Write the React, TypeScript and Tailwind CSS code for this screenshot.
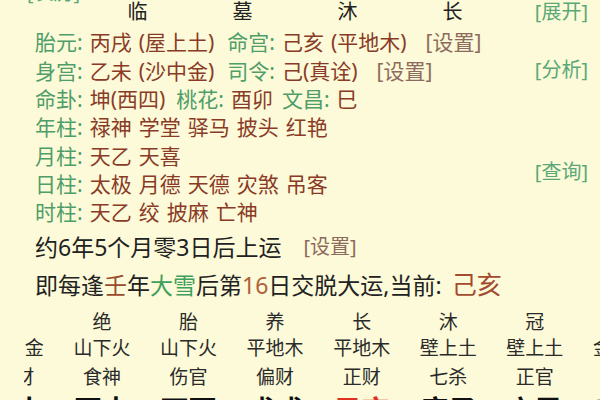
import React from 'react';

const green = 'text-[#4f9d69]';
const brown = 'text-[#8a3b27]';
const link = 'text-[#8d6b5c]';
const btn = 'text-[#5aa877]';

function Label({ children, className = '' }: { children: React.ReactNode; className?: string }) {
  return <span className={`${green} ${className}`}>{children}</span>;
}

function Val({ children, className = '' }: { children: React.ReactNode; className?: string }) {
  return <span className={`${brown} ${className}`}>{children}</span>;
}

function InfoRow({ children }: { children: React.ReactNode }) {
  return <div className="flex h-[28.3px] items-center gap-[7px] whitespace-nowrap">{children}</div>;
}

const pillars = ['临', '墓', '沐', '长'];

const dayun = [
  { stage: '', nayin: '沙中金', god: '偏财', gz: '乙未' },
  { stage: '绝', nayin: '山下火', god: '食神', gz: '丙申' },
  { stage: '胎', nayin: '山下火', god: '伤官', gz: '丁酉' },
  { stage: '养', nayin: '平地木', god: '偏财', gz: '戊戌' },
  { stage: '长', nayin: '平地木', god: '正财', gz: '己亥', current: true },
  { stage: '沐', nayin: '壁上土', god: '七杀', gz: '庚子' },
  { stage: '冠', nayin: '壁上土', god: '正官', gz: '辛丑' },
  { stage: '临', nayin: '金箔金', god: '偏印', gz: '壬寅' },
];

export default function App() {
  return (
    <div
      className="w-[600px] h-[400px] overflow-hidden bg-[#fcfad8] text-[#222]"
      style={{ fontFamily: '"Noto Sans", "Noto Sans CJK SC", sans-serif' }}
    >
      {/* row cut off by the top edge */}
      <div className="-mt-[17px] h-[20px] pl-[27px] text-[20px] leading-[20px]">
        <span className={btn}>[农历]</span>
      </div>

      <div className="-mt-[3px] flex h-[24px] items-center pr-[12px] text-[20px]">
        <div className="flex pl-[85px]">
          {pillars.map((p, i) => (
            <div key={i} className="w-[105px] text-center">
              {p}
            </div>
          ))}
        </div>
        <span className={`ml-auto ${btn}`}>[展开]</span>
      </div>

      <div className="mt-[5px] flex pl-[35px] pr-[12px] text-[21px]">
        <div className="flex flex-col">
          <InfoRow>
            <Label>胎元:</Label>
            <Val>丙戌</Val>
            <Val>(屋上土)</Val>
            <Label className="ml-[6px]">命宫:</Label>
            <Val>己亥</Val>
            <Val>(平地木)</Val>
            <span className={`ml-[12px] ${link}`}>[设置]</span>
          </InfoRow>
          <InfoRow>
            <Label>身宫:</Label>
            <Val>乙未</Val>
            <Val>(沙中金)</Val>
            <Label className="ml-[6px]">司令:</Label>
            <Val>己(真诠)</Val>
            <span className={`ml-[12px] ${link}`}>[设置]</span>
          </InfoRow>
          <InfoRow>
            <Label>命卦:</Label>
            <Val>坤(西四)</Val>
            <Label className="ml-[4px]">桃花:</Label>
            <Val>酉卯</Val>
            <Label className="ml-[2px]">文昌:</Label>
            <Val>巳</Val>
          </InfoRow>
          <InfoRow>
            <Label>年柱:</Label>
            <Val>禄神</Val>
            <Val>学堂</Val>
            <Val>驿马</Val>
            <Val>披头</Val>
            <Val>红艳</Val>
          </InfoRow>
          <InfoRow>
            <Label>月柱:</Label>
            <Val>天乙</Val>
            <Val>天喜</Val>
          </InfoRow>
          <InfoRow>
            <Label>日柱:</Label>
            <Val>太极</Val>
            <Val>月德</Val>
            <Val>天德</Val>
            <Val>灾煞</Val>
            <Val>吊客</Val>
          </InfoRow>
          <InfoRow>
            <Label>时柱:</Label>
            <Val>天乙</Val>
            <Val>绞</Val>
            <Val>披麻</Val>
            <Val>亡神</Val>
          </InfoRow>
        </div>
        <div className="ml-auto flex flex-col items-end text-[20px] leading-[20px]">
          <span className={`mt-[31px] ${btn}`}>[分析]</span>
          <span className={`mt-[82px] ${btn}`}>[查询]</span>
        </div>
      </div>

      <div className="mt-[5px] flex h-[30px] items-center pl-[35px] text-[23px] whitespace-nowrap">
        <span>约6年5个月零3日后上运</span>
        <span className={`ml-[22px] text-[20px] ${link}`}>[设置]</span>
      </div>

      <div className="mt-[7px] flex h-[32px] items-center pl-[35px] text-[23px] whitespace-nowrap">
        <span>即每逢</span>
        <span className="text-[#9a4a2e]">壬</span>
        <span>年</span>
        <span className="text-[#3f9f5c]">大雪</span>
        <span>后第</span>
        <span className="text-[#b0603a]">16</span>
        <span>日交脱大运,当前:</span>
        <span className="ml-[10px] text-[25px] text-[#a44a30]">己亥</span>
      </div>

      <div className="ml-[24px] overflow-hidden">
        <div className="-ml-[52px] flex w-[700px]">
          {dayun.map((d, i) => (
            <div key={i} className="flex w-[86.6px] shrink-0 flex-col items-center whitespace-nowrap text-[#2a2a2a]">
              <div className="mt-[8px] flex h-[26px] items-center text-[19px]">{d.stage}</div>
              <div className="flex h-[26px] items-center text-[19px]">{d.nayin}</div>
              <div className="mt-[2px] flex h-[28px] items-center text-[19px]">{d.god}</div>
              <div
                className={`mt-[4px] flex h-[34px] items-start text-[28px] font-bold leading-[30px] ${
                  d.current ? 'text-[#e0301f]' : 'text-[#111]'
                }`}
              >
                {d.gz}
              </div>
            </div>
          ))}
        </div>
      </div>
    </div>
  );
}
